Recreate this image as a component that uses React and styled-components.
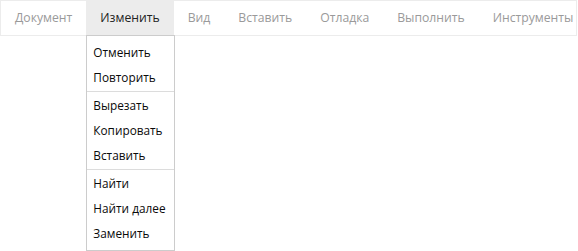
import React from 'react';
import styled, { createGlobalStyle } from 'styled-components';

const GlobalStyle = createGlobalStyle`
  html, body {
    margin: 0;
    background: #ffffff;
    font-family: "Open Sans", "Noto Sans", sans-serif;
  }
`

const Page = styled.div`
  position: relative;
  width: 578px;
  height: 251px;
  background: #ffffff;
`

const MenuBar = styled.nav`
  display: flex;
  width: 577px;
  height: 36px;
  box-sizing: border-box;
  border: 1px solid #ececec;
  background: #ffffff;
`

const TopItem = styled.div`
  position: relative;
  flex: none;
  padding: 0 14px;
  height: 34px;
  line-height: 34px;
  font-size: 12.2px;
  color: ${props => (props.$active ? '#222222' : '#9a9a9a')};
  background: ${props => (props.$active ? '#ececec' : 'transparent')};
  white-space: nowrap;
  cursor: default;
  z-index: ${props => (props.$active ? 2 : 1)};
`

const Dropdown = styled.div`
  position: absolute;
  top: 34px;
  left: 0;
  width: 89px;
  box-sizing: border-box;
  padding: 4px 0 4px;
  border: 1px solid #cccccc;
  background: #ffffff;
`

const DropItem = styled.div`
  height: 25px;
  line-height: 25px;
  padding: 0 6px;
  font-size: 11.8px;
  color: #0a0a0a;
  white-space: nowrap;
`

const Separator = styled.div`
  height: 1px;
  margin: 1px 0 1px;
  background: #dcdcdc;
`

const menus = ['Документ', 'Изменить', 'Вид', 'Вставить', 'Отладка', 'Выполнить', 'Инструменты'];

const editGroups = [
  ['Отменить', 'Повторить'],
  ['Вырезать', 'Копировать', 'Вставить'],
  ['Найти', 'Найти далее', 'Заменить'],
];

function EditMenu() {
  return (
    <Dropdown>
      {editGroups.map((group, i) => (
        <React.Fragment key={i}>
          {i > 0 && <Separator />}
          {group.map(label => (
            <DropItem key={label}>{label}</DropItem>
          ))}
        </React.Fragment>
      ))}
    </Dropdown>
  );
}

export default function App() {
  return (
    <Page>
      <GlobalStyle />
      <MenuBar>
        {menus.map(name => (
          <TopItem key={name} $active={name === 'Изменить'}>
            {name}
            {name === 'Изменить' && <EditMenu />}
          </TopItem>
        ))}
      </MenuBar>
    </Page>
  );
}
